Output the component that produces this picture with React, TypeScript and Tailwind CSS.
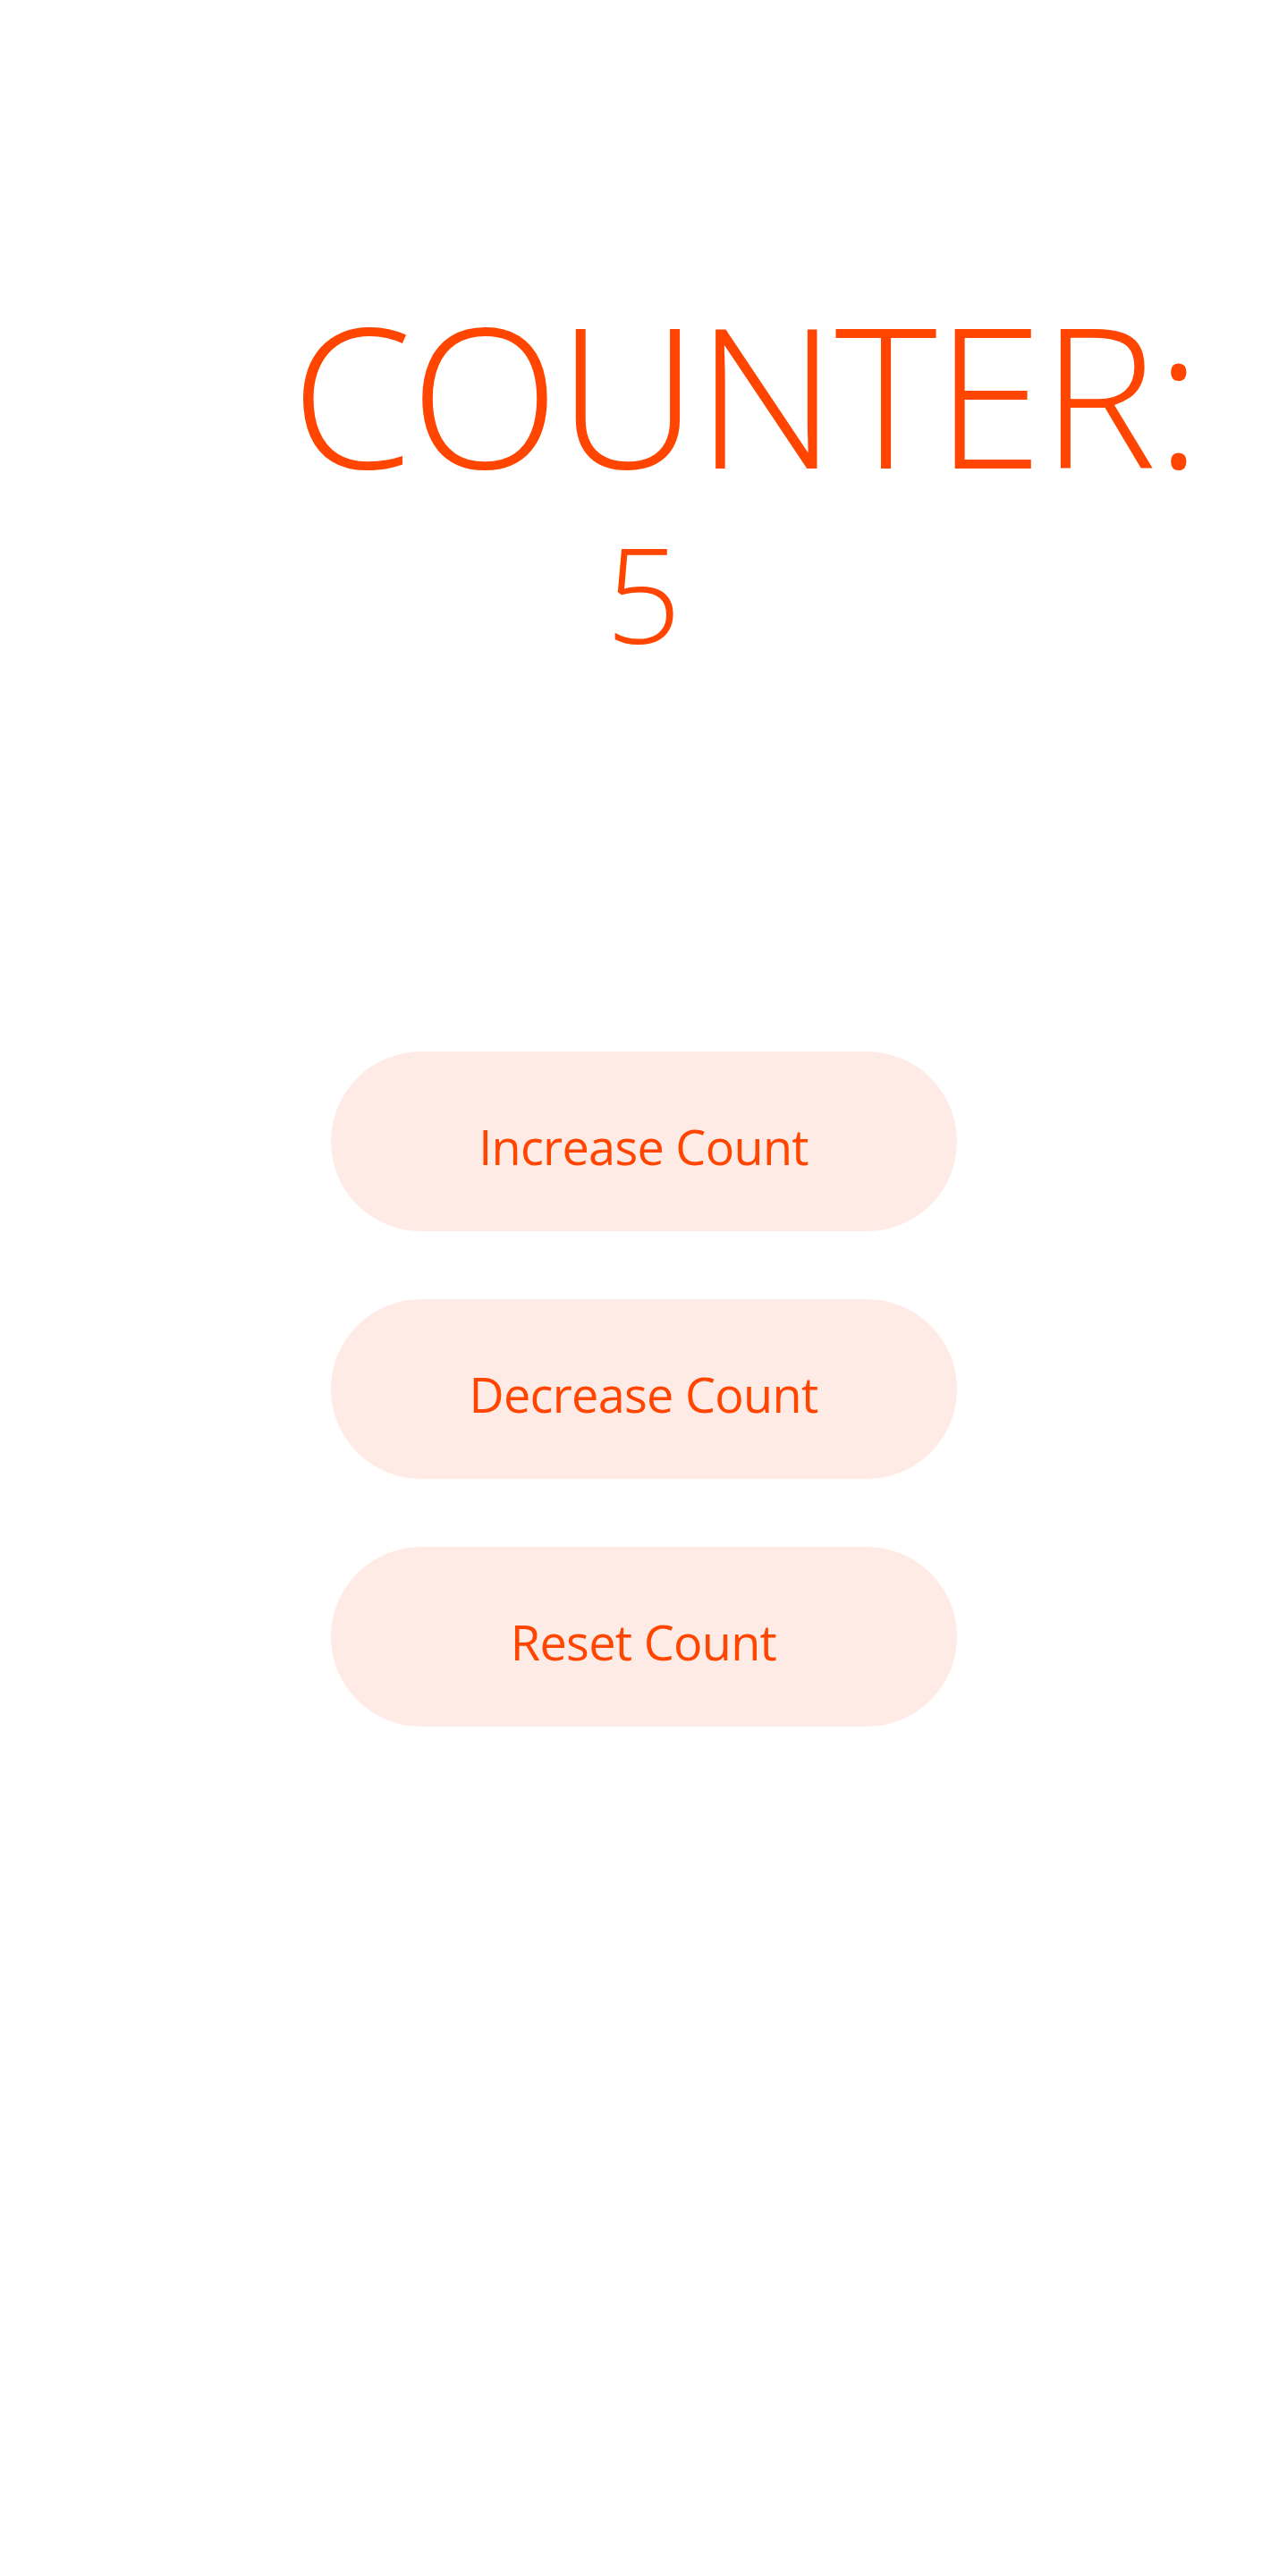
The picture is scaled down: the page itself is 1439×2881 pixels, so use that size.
import { useState } from "react";

const font = { fontFamily: '"Open Sans", "Noto Sans", sans-serif' };

export default function App() {
  const [count, setCount] = useState(5);

  return (
    <div
      style={font}
      className="flex min-h-[2881px] flex-col items-center bg-white text-[#ff4500]"
    >
      <div className="mt-[342px] w-[760px]">
        <div className="ml-[-14px] whitespace-nowrap text-[218px] font-light leading-[195px] tracking-[-2px]">
          COUNTER:
        </div>
      </div>
      <div className="mt-[28px] w-full text-center text-[148px] font-light leading-[195px]">
        {count}
      </div>

      <div className="mt-[416px] flex flex-col gap-[76px]">
        <button
          onClick={() => setCount(count + 1)}
          className="h-[201px] w-[700px] rounded-full bg-[#ffebe6] pt-[11px] text-[54px] tracking-[-0.7px]"
        >
          Increase Count
        </button>
        <button
          onClick={() => setCount(count - 1)}
          className="h-[201px] w-[700px] rounded-full bg-[#ffebe6] pt-[11px] text-[54px] tracking-[-0.7px]"
        >
          Decrease Count
        </button>
        <button
          onClick={() => setCount(0)}
          className="h-[201px] w-[700px] rounded-full bg-[#ffebe6] pt-[11px] text-[54px] tracking-[-0.7px]"
        >
          Reset Count
        </button>
      </div>
    </div>
  );
}
